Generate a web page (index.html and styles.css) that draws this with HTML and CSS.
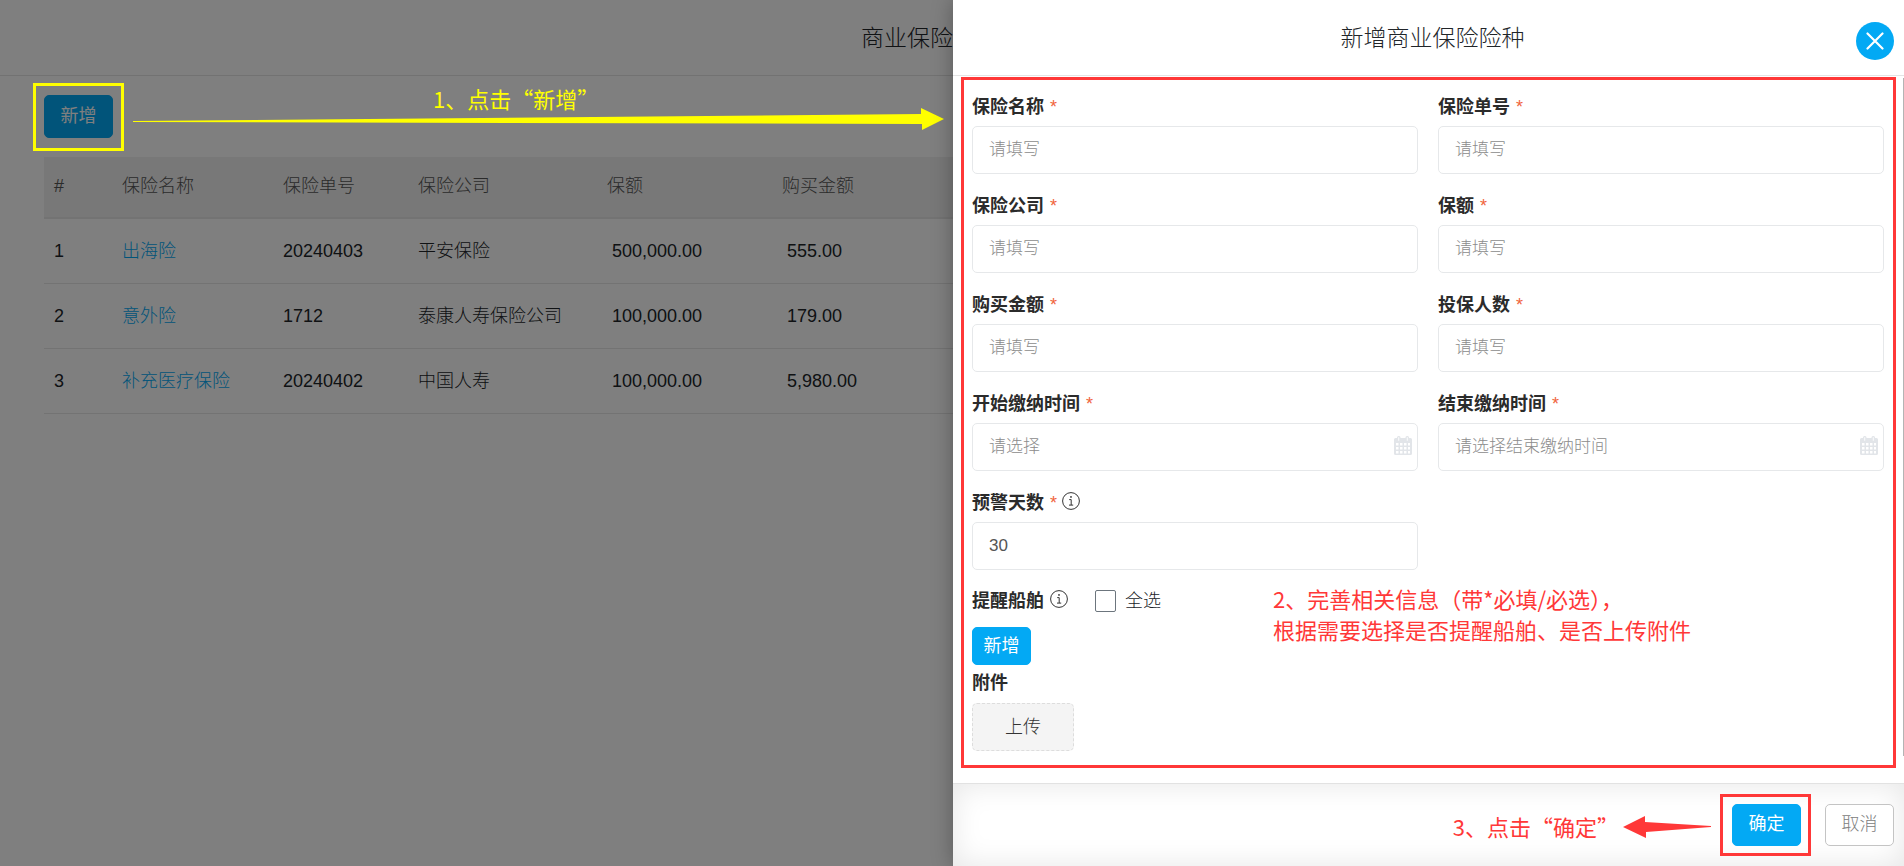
FILE: index.html
```html
<!DOCTYPE html>
<html lang="zh-CN">
<head>
<meta charset="utf-8">
<meta name="viewport" content="width=device-width, initial-scale=1">
<title>新增商业保险险种</title>
<link rel="stylesheet" href="styles.css">
</head>
<body>
<svg class="sprite" aria-hidden="true">
  <symbol id="info" viewBox="0 0 18 18">
    <circle cx="9" cy="9" r="8.4" fill="none" stroke="currentColor" stroke-width="1"/>
    <path d="M7.2 7.6H9.2V13M7 13.1H11.2" fill="none" stroke="currentColor" stroke-width="1"/>
    <circle cx="9" cy="4.9" r=".9" fill="currentColor"/>
  </symbol>
  <symbol id="calendar" viewBox="0 0 18 19">
    <path fill="currentColor" fill-rule="evenodd" d="M1.500 2H3V1.500A1.500 1.500 0 0 1 4.500 0H5A1.500 1.500 0 0 1 6.500 1.500V2H11.500V1.500A1.500 1.500 0 0 1 13 0H13.500A1.500 1.500 0 0 1 15 1.500V2H16.500A1.500 1.500 0 0 1 18 3.500V17.500A1.500 1.500 0 0 1 16.500 19H1.500A1.500 1.500 0 0 1 0 17.500V3.500A1.500 1.500 0 0 1 1.500 2ZM4.300 1.300V4.700H5.200V1.300ZM12.800 1.300V4.700H13.700V1.300ZM2 7V9.500H4.500V7ZM6 7V9.500H8.500V7ZM10 7V9.500H12.500V7ZM14 7V9.500H16V7ZM2 11V13.500H4.500V11ZM6 11V13.500H8.500V11ZM10 11V13.500H12.500V11ZM14 11V13.500H16V11ZM2 15V17.500H4.500V15ZM6 15V17.500H8.500V15ZM10 15V17.500H12.500V15ZM14 15V17.500H16V15Z"/>
  </symbol>
</svg>

<div class="app">
  <main class="page">
    <header class="bar bar-page"><h1 class="title">商业保险</h1></header>
    <div class="page-body">
      <button type="button" class="btn btn-primary">新增</button>
      <table class="list">
        <colgroup><col class="c-index"><col class="c-name"><col class="c-number"><col class="c-company"><col class="c-amount"><col></colgroup>
        <thead>
          <tr><th>#</th><th>保险名称</th><th>保险单号</th><th>保险公司</th><th>保额</th><th>购买金额</th></tr>
        </thead>
        <tbody>
          <tr><td>1</td><td><a href="#">出海险</a></td><td>20240403</td><td>平安保险</td><td class="money">500,000.00</td><td class="money">555.00</td></tr>
          <tr><td>2</td><td><a href="#">意外险</a></td><td>1712</td><td>泰康人寿保险公司</td><td class="money">100,000.00</td><td class="money">179.00</td></tr>
          <tr><td>3</td><td><a href="#">补充医疗保险</a></td><td>20240402</td><td>中国人寿</td><td class="money">100,000.00</td><td class="money">5,980.00</td></tr>
        </tbody>
      </table>
    </div>
    <div class="mask"></div>
    <div class="step step-open">
      <div class="step-frame"></div>
      <p class="note note-open">1、点击“新增”</p>
      <svg class="arrow-open" viewBox="0 0 811 22" preserveAspectRatio="none" aria-hidden="true">
        <path fill="#ffff00" d="M0 13L788 6V0L811 11L789 22V16L0 14Z"/>
      </svg>
    </div>
  </main>

  <form class="drawer">
    <header class="bar bar-drawer">
      <h2 class="title">新增商业保险险种</h2>
      <button type="button" class="close" aria-label="关闭">
        <svg viewBox="0 0 18 18" width="18" height="18" aria-hidden="true"><path d="M1.500 1.500L16.500 16.500M16.500 1.500L1.500 16.500" fill="none" stroke="#fff" stroke-width="2.200" stroke-linecap="round"/></svg>
      </button>
    </header>

    <div class="drawer-body">
      <div class="fields">
        <div class="field">
          <label class="label" for="name">保险名称 <span class="req">*</span></label>
          <input class="input" id="name" type="text" placeholder="请填写">
        </div>
        <div class="field">
          <label class="label" for="number">保险单号 <span class="req">*</span></label>
          <input class="input" id="number" type="text" placeholder="请填写">
        </div>
        <div class="field">
          <label class="label" for="company">保险公司 <span class="req">*</span></label>
          <input class="input" id="company" type="text" placeholder="请填写">
        </div>
        <div class="field">
          <label class="label" for="amount">保额 <span class="req">*</span></label>
          <input class="input" id="amount" type="text" placeholder="请填写">
        </div>
        <div class="field">
          <label class="label" for="paid">购买金额 <span class="req">*</span></label>
          <input class="input" id="paid" type="text" placeholder="请填写">
        </div>
        <div class="field">
          <label class="label" for="people">投保人数 <span class="req">*</span></label>
          <input class="input" id="people" type="text" placeholder="请填写">
        </div>
        <div class="field">
          <label class="label" for="start">开始缴纳时间 <span class="req">*</span></label>
          <div class="date">
            <input class="input" id="start" type="text" placeholder="请选择">
            <svg class="cal" aria-hidden="true"><use href="#calendar"/></svg>
          </div>
        </div>
        <div class="field">
          <label class="label" for="end">结束缴纳时间 <span class="req">*</span></label>
          <div class="date">
            <input class="input" id="end" type="text" placeholder="请选择结束缴纳时间">
            <svg class="cal" aria-hidden="true"><use href="#calendar"/></svg>
          </div>
        </div>
        <div class="field">
          <label class="label" for="days">预警天数 <span class="req">*</span><svg class="info" aria-hidden="true"><use href="#info"/></svg></label>
          <input class="input" id="days" type="text" value="30">
        </div>
      </div>

      <div class="ships">
        <span class="label">提醒船舶 <svg class="info" aria-hidden="true"><use href="#info"/></svg></span>
        <label class="check"><input type="checkbox" class="box">全选</label>
      </div>
      <button type="button" class="btn btn-primary btn-small">新增</button>
      <div class="label">附件</div>
      <button type="button" class="upload">上传</button>

      <div class="frame-form"></div>
      <p class="note note-form">2、完善相关信息（带*必填/必选），<br>根据需要选择是否提醒船舶、是否上传附件</p>
      <div class="scroll"></div>
    </div>

    <footer class="footer">
      <p class="note note-confirm">3、点击“确定”</p>
      <svg class="arrow-confirm" viewBox="0 0 88 22" width="88" height="22" aria-hidden="true">
        <path fill="#ff3838" d="M0 11L22 0V6L88 10V11L23 16V22Z"/>
      </svg>
      <div class="confirm"><button type="submit" class="btn btn-primary">确定</button></div>
      <button type="button" class="btn btn-plain">取消</button>
    </footer>
  </form>
</div>
</body>
</html>
```
FILE: styles.css
```css
*, *::before, *::after { box-sizing: border-box; }

body {
  margin: 0;
  background: #fff;
  color: #212529;
  font: 300 18px/27px "Liberation Sans", "Noto Sans CJK SC", sans-serif;
}

button, input { font: inherit; }
h1, h2, p { margin: 0; }
.sprite { position: absolute; width: 0; height: 0; }

.app {
  display: grid;
  grid-template-columns: 953fr 951fr;
  min-height: 100vh;
  overflow: hidden;
}

/* List page */
.page { position: relative; min-width: 0; }

.bar {
  position: relative;
  display: flex;
  align-items: center;
  justify-content: center;
  height: 76px;
  border-bottom: 1px solid #e4e4e4;
}
.bar-page { justify-content: flex-end; }
.bar-drawer { padding-left: 8px; }
.title { font-size: 23px; font-weight: 300; line-height: 36px; white-space: nowrap; }

.page-body { padding: 19px 0 0 44px; }

.btn {
  width: 69px;
  height: 43px;
  padding: 0 0 1px;
  border: 1px solid #03a9f4;
  border-radius: 5px;
  cursor: pointer;
}
.btn-primary { background: #03a9f4; color: #fff; font-weight: 400; }
.btn-plain { border-color: #c4c4c4; background: #fff; color: #808080; }

.list {
  width: 100%;
  margin-top: 19px;
  border-collapse: separate;
  border-spacing: 0;
  table-layout: fixed;
}
.c-index { width: 68px; }
.c-name { width: 161px; }
.c-number { width: 135px; }
.c-company { width: 189px; }
.c-amount { width: 175px; }
.list th {
  height: 62px;
  padding: 0 10px 1px;
  background: #f0f0f0;
  border-bottom: 2px solid #e6e6e6;
  color: #555;
  font-weight: 300;
  text-align: left;
}
.list td {
  height: 65px;
  padding: 0 10px;
  border-bottom: 1px solid #e6e6e6;
  white-space: nowrap;
}
.list .money { padding-left: 15px; }
.list a { color: #03a9f4; text-decoration: none; }

.mask { position: absolute; inset: 0; background: rgba(0, 0, 0, .5); }

/* Walkthrough notes */
.note {
  font-size: 22px;
  font-weight: 400;
  line-height: 31px;
  font-family: "Noto Sans CJK SC", sans-serif;
  color: #ff3838;
  white-space: nowrap;
}
.step-open { position: absolute; inset: 83px 9px auto 33px; height: 68px; }
.step-frame { width: 91px; height: 68px; border: 3px solid #ff0; }
.note-open { position: absolute; top: 0; left: 400px; color: #ff0; }
.arrow-open { position: absolute; top: 25px; left: 100px; width: calc(100% - 100px); height: 22px; }

/* Drawer */
.drawer {
  position: relative;
  display: flex;
  flex-direction: column;
  min-width: 0;
  background: #fff;
  box-shadow: 0 0 20px rgba(0, 0, 0, .3);
}
.close {
  position: absolute;
  top: 22px;
  right: 10px;
  display: grid;
  place-items: center;
  width: 38px;
  height: 38px;
  padding: 0;
  border: 0;
  border-radius: 50%;
  background: #03a9f4;
  cursor: pointer;
}

.drawer-body { position: relative; flex: 1; padding: 17px 20px 32px 19px; }
.fields {
  display: grid;
  grid-template-columns: 1fr 1fr;
  gap: 18px 20px;
}
.field { min-width: 0; }
.label { display: block; font-weight: 700; line-height: 29px; color: #2b2b2b; }
.field .label { margin-bottom: 4px; }
.req { margin-left: 1px; font-weight: 400; color: #f0643c; }
.info { width: 18px; height: 18px; margin-left: 5px; vertical-align: -1px; color: #333; }

.input {
  display: block;
  width: 100%;
  height: 48px;
  padding: 0 16px;
  border: 1px solid #e6e8ea;
  border-radius: 5px;
  background: #fff;
  color: #555;
  font-size: 17px;
}
.input::placeholder { color: #8c8c8c; opacity: 1; }
.date { position: relative; }
.cal { position: absolute; top: 13px; right: 6px; width: 18px; height: 19px; color: #e2e5e9; }

.ships { display: flex; align-items: center; gap: 27px; height: 34px; margin-top: 14px; }
.ships .info { margin-left: 1px; }
.check { display: flex; align-items: center; gap: 9px; }
.box {
  appearance: none;
  width: 21px;
  height: 22px;
  margin: 0;
  border: 1px solid #6c757d;
  border-radius: 2px;
  background: #fff;
}
.btn-small { display: block; width: 59px; height: 38px; margin: 9px 0 4px; padding: 0; }
.upload {
  display: block;
  width: 102px;
  height: 48px;
  margin-top: 5px;
  padding: 0;
  border: 1px dashed #ddd;
  border-radius: 5px;
  background: #f4f4f4;
  color: #333;
  cursor: pointer;
}

.frame-form { position: absolute; inset: 1px 8px 15px; border: 3px solid #ff3838; pointer-events: none; }
.note-form { position: absolute; top: 507px; left: 320px; }
.scroll { position: absolute; top: 2px; right: 0; bottom: 27px; width: 1px; background: #b4b4b4; }

.footer {
  display: flex;
  align-items: center;
  height: 83px;
  padding: 0 10px 0 19px;
  justify-content: flex-end;
  border-top: 1px solid #e2e2e2;
  box-shadow: inset 0 0 30px rgba(0, 0, 0, .1);
}
.arrow-confirm { margin: 3px 21px 0 4px; }
.note-confirm { margin-top: 2px; }
.confirm { position: relative; margin-right: 24px; }
.footer .btn { display: block; height: 42px; }
.confirm::before {
  content: "";
  position: absolute;
  inset: -10px -10px -10px -12px;
  border: 3px solid #ff3838;
  pointer-events: none;
}
```
